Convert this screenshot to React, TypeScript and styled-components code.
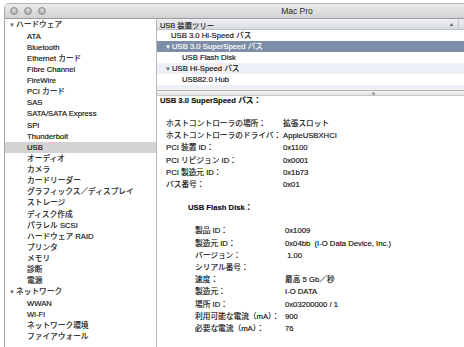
import React from 'react';
import styled, { createGlobalStyle } from 'styled-components';

const Global = createGlobalStyle`
  html, body { margin: 0; padding: 0; background: #fff; overflow: hidden; }
  body { font-family: "Liberation Sans", "Noto Sans CJK JP", sans-serif; color: #111; }
`;

const Window = styled.div`
  width: 584px;
  height: 344px;
  margin: 3px 0 0 4px;
  display: flex;
  flex-direction: column;
  border-left: 1px solid #a6a6a6;
  border-top: 1px solid #b4b4b4;
  border-radius: 5px 5px 0 0;
  overflow: hidden;
  background: #fff;
`;

const TitleBar = styled.div`
  height: 15px;
  box-sizing: border-box;
  flex: none;
  display: grid;
  grid-template-columns: 1fr auto 1fr;
  align-items: center;
  background: linear-gradient(#ececec, #d2d2d2);
  border-bottom: 1px solid #9c9c9c;
`;

const Lights = styled.div`
  display: flex;
  gap: 6px;
  padding-left: 5px;
`;

const Light = styled.span`
  width: 8px;
  height: 8px;
  border-radius: 50%;
  box-sizing: border-box;
  border: 1px solid #8f8f8f;
  background: radial-gradient(circle at 50% 35%, #e2e2e2, #a9a9a9 70%);
`;

const Title = styled.div`
  font-size: 8.5px;
  color: #2a2a2a;
`;

const Body = styled.div`
  flex: 1;
  display: flex;
  min-height: 0;
`;

const Sidebar = styled.div`
  width: 151px;
  flex: none;
  border-right: 1px solid #b8b8b8;
  overflow: hidden;
  padding-top: 0.4px;
`;

const SideItem = styled.div<{ $level: number; $selected?: boolean }>`
  height: 11.14px;
  line-height: 11.14px;
  font-size: 7.7px;
  white-space: nowrap;
  padding-left: ${(p) => (p.$level === 0 ? 4 : 22)}px;
  background: ${(p) => (p.$selected ? '#d3d3d3' : 'transparent')};
  color: #0e0e0e;
  -webkit-text-stroke: 0.15px currentColor;
`;

const Tri = styled.span<{ $light?: boolean }>`
  display: inline-block;
  width: 7px;
  font-size: 6px;
  color: ${(p) => (p.$light ? '#fff' : '#6a6a6a')};
  -webkit-text-stroke: 0;
`;

const Main = styled.div`
  flex: 1;
  display: flex;
  flex-direction: column;
  min-width: 0;
`;

const TreeHeader = styled.div`
  height: 11px;
  box-sizing: border-box;
  display: flex;
  background: linear-gradient(#eef0f3, #d8dce2);
  border-bottom: 1px solid #bcc0c6;
`;

const HeaderCol = styled.div`
  width: 302px;
  box-sizing: border-box;
  display: flex;
  justify-content: space-between;
  align-items: center;
  padding: 0 4px 0 3px;
  border-right: 1px solid #c4c8ce;
  font-size: 7.4px;
  color: #1a1a1a;
  -webkit-text-stroke: 0.15px currentColor;
`;

const SortArrow = styled.span`
  font-size: 5px;
  color: #555;
  -webkit-text-stroke: 0;
`;

const TreeRow = styled.div<{ $level: number; $selected?: boolean; $alt?: boolean }>`
  height: 11px;
  line-height: 11px;
  font-size: 7.7px;
  white-space: nowrap;
  padding-left: ${(p) => (p.$level === 1 ? 8 : 25)}px;
  background: ${(p) => (p.$selected ? '#7f8ea8' : p.$alt ? '#edf1f7' : '#fff')};
  color: ${(p) => (p.$selected ? '#fff' : '#0e0e0e')};
  -webkit-text-stroke: 0.15px currentColor;
`;

const Spacer = styled.span`
  display: inline-block;
  width: 6px;
`;

const Filler = styled.div`
  height: 5px;
  background: #edf1f7;
`;

const Splitter = styled.div`
  height: 6px;
  box-sizing: border-box;
  background: linear-gradient(#f6f6f6, #dedede);
  border-top: 1px solid #b2b2b2;
  border-bottom: 1px solid #c8c8c8;
  display: flex;
  justify-content: center;
  align-items: center;
`;

const Dimple = styled.span`
  width: 3px;
  height: 3px;
  border-radius: 50%;
  background: #a0a0a0;
`;

const Detail = styled.div`
  flex: 1;
  padding-left: 3px;
  font-size: 7.7px;
  color: #0e0e0e;
  -webkit-text-stroke: 0.15px currentColor;
`;

const Heading = styled.div<{ $indent: number }>`
  height: 10px;
  line-height: 10px;
  font-weight: bold;
  margin-left: ${(p) => p.$indent}px;
  margin-bottom: 12px;
  white-space: nowrap;
`;

const Props = styled.div<{ $indent: number; $labelWidth: number }>`
  display: grid;
  grid-template-columns: ${(p) => p.$labelWidth}px auto;
  margin-left: ${(p) => p.$indent}px;
  line-height: 12.2px;
  margin-bottom: 12.2px;
  white-space: nowrap;
`;

const Label = styled.div``;
const Value = styled.div``;

const sidebar: [string, number, boolean?][] = [
  ['ハードウェア', 0],
  ['ATA', 1],
  ['Bluetooth', 1],
  ['Ethernet カード', 1],
  ['Fibre Channel', 1],
  ['FireWire', 1],
  ['PCI カード', 1],
  ['SAS', 1],
  ['SATA/SATA Express', 1],
  ['SPI', 1],
  ['Thunderbolt', 1],
  ['USB', 1, true],
  ['オーディオ', 1],
  ['カメラ', 1],
  ['カードリーダー', 1],
  ['グラフィックス／ディスプレイ', 1],
  ['ストレージ', 1],
  ['ディスク作成', 1],
  ['パラレル SCSI', 1],
  ['ハードウェア RAID', 1],
  ['プリンタ', 1],
  ['メモリ', 1],
  ['診断', 1],
  ['電源', 1],
  ['ネットワーク', 0],
  ['WWAN', 1],
  ['Wi-Fi', 1],
  ['ネットワーク環境', 1],
  ['ファイアウォール', 1],
];

const tree: { label: string; level: number; open?: boolean; selected?: boolean }[] = [
  { label: 'USB 3.0 Hi-Speed バス', level: 1 },
  { label: 'USB 3.0 SuperSpeed バス', level: 1, open: true, selected: true },
  { label: 'USB Flash Disk', level: 2 },
  { label: 'USB Hi-Speed バス', level: 1, open: true },
  { label: 'USB82.0 Hub', level: 2 },
];

const busProps: [string, string][] = [
  ['ホストコントローラの場所：', '拡張スロット'],
  ['ホストコントローラのドライバ：', 'AppleUSBXHCI'],
  ['PCI 装置 ID：', '0x1100'],
  ['PCI リビジョン ID：', '0x0001'],
  ['PCI 製造元 ID：', '0x1b73'],
  ['バス番号：', '0x01'],
];

const diskProps: [string, string][] = [
  ['製品 ID：', '0x1009'],
  ['製造元 ID：', '0x04bb\u00a0\u00a0(I-O Data Device, Inc.)'],
  ['バージョン：', '\u00a01.00'],
  ['シリアル番号：', ''],
  ['速度：', '最高 5 Gb／秒'],
  ['製造元：', 'I-O DATA'],
  ['場所 ID：', '0x03200000 / 1'],
  ['利用可能な電流（mA）：', '900'],
  ['必要な電流（mA）：', '76'],
];

export default function App() {
  return (
    <>
      <Global />
      <Window>
        <TitleBar>
          <Lights>
            <Light />
            <Light />
            <Light />
          </Lights>
          <Title>Mac Pro</Title>
          <div />
        </TitleBar>
        <Body>
          <Sidebar>
            {sidebar.map(([label, level, sel]) => (
              <SideItem key={label} $level={level} $selected={sel}>
                {level === 0 && <Tri>▼</Tri>}
                {label}
              </SideItem>
            ))}
          </Sidebar>
          <Main>
            <TreeHeader>
              <HeaderCol>
                <span>USB 装置ツリー</span>
                <SortArrow>▲</SortArrow>
              </HeaderCol>
            </TreeHeader>
            {tree.map((r, i) => (
              <TreeRow key={r.label} $level={r.level} $selected={r.selected} $alt={i % 2 === 1}>
                {r.open ? <Tri $light={r.selected}>▼</Tri> : r.level === 1 ? <Spacer /> : null}
                {r.label}
              </TreeRow>
            ))}
            <Filler />
            <Splitter>
              <Dimple />
            </Splitter>
            <Detail>
              <Heading $indent={0}>USB 3.0 SuperSpeed バス：</Heading>
              <Props $indent={6} $labelWidth={117}>
                {busProps.map(([k, v]) => (
                  <React.Fragment key={k}>
                    <Label>{k}</Label>
                    <Value>{v}</Value>
                  </React.Fragment>
                ))}
              </Props>
              <Heading $indent={28}>USB Flash Disk：</Heading>
              <Props $indent={35} $labelWidth={90}>
                {diskProps.map(([k, v]) => (
                  <React.Fragment key={k}>
                    <Label>{k}</Label>
                    <Value>{v}</Value>
                  </React.Fragment>
                ))}
              </Props>
            </Detail>
          </Main>
        </Body>
      </Window>
    </>
  );
}
